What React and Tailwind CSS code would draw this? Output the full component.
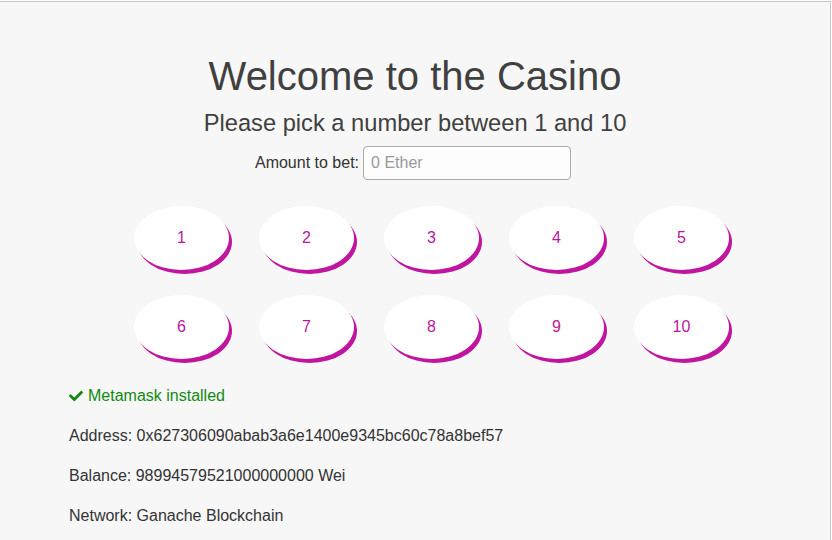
import React from "react";
import { FaCheck } from "react-icons/fa";

const nums = [[1, 2, 3, 4, 5], [6, 7, 8, 9, 10]];

export default function App() {
  return (
    <div
      className="w-[832px] h-[540px] bg-white overflow-hidden"
      style={{ fontFamily: '"Liberation Sans", Arial, sans-serif' }}
    >
      <div className="mt-[1px] w-[831px] h-[539px] border-t border-r border-[#c8c8c8] bg-[#f7f7f7] flex flex-col">
        <h1 className="mt-[52px] text-center text-[40px] leading-[44px] text-[#404040]">
          Welcome to the Casino
        </h1>
        <h2 className="mt-[11px] text-center text-[23.7px] leading-[28px] text-[#404040]">
          Please pick a number between 1 and 10
        </h2>
        <div className="mt-[9px] mr-[4px] flex items-center justify-center gap-[4px]">
          <span className="text-[16px] text-[#333]">Amount to bet:</span>
          <input
            type="text"
            placeholder="0 Ether"
            className="w-[208px] h-[34px] rounded-[4px] border border-[#aaaaaa] bg-[#fdfdfd] px-[7px] text-[16px] text-[#333] placeholder:text-[#999] outline-none"
          />
        </div>
        <div className="mt-[26px] ml-[134px] flex flex-col gap-[25px]">
          {nums.map((row, i) => (
            <div key={i} className="flex gap-[30px]">
              {row.map((n) => (
                <button
                  key={n}
                  className="w-[95px] h-[64px] rounded-[50%] bg-white shadow-[3px_4px_0_#c0169f] text-[16px] text-[#b8189e] flex items-center justify-center"
                >
                  {n}
                </button>
              ))}
            </div>
          ))}
        </div>
        <div className="mt-[25px] ml-[69px] flex flex-col gap-[16px] text-[16px] leading-[24px] text-[#333]">
          <div className="flex items-center gap-[5px] text-[#118a11]">
            <FaCheck className="w-[14px] h-[14px]" />
            <span>Metamask installed</span>
          </div>
          <div>Address: 0x627306090abab3a6e1400e9345bc60c78a8bef57</div>
          <div>Balance: 98994579521000000000 Wei</div>
          <div>Network: Ganache Blockchain</div>
        </div>
      </div>
    </div>
  );
}
